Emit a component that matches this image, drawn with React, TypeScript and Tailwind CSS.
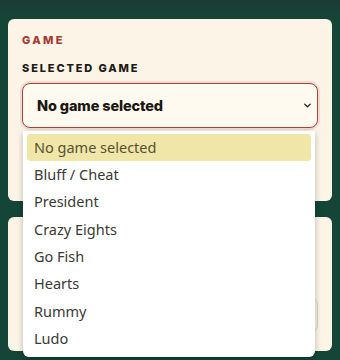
import { ChevronDown } from 'lucide-react';

const games = [
  'No game selected',
  'Bluff / Cheat',
  'President',
  'Crazy Eights',
  'Go Fish',
  'Hearts',
  'Rummy',
  'Ludo',
];

export default function App() {
  return (
    <div className="relative h-[360px] w-[340px] overflow-hidden bg-gradient-to-b from-[#1b3b34] to-[#144536] to-[20px] px-2 pt-[19px] font-['Inter',sans-serif]">
      {/* Game card */}
      <div className="h-[182px] rounded-md bg-[#fbf4e7] px-[14px] pt-[16px]">
        <div className="text-[11px] font-extrabold uppercase leading-none tracking-[0.21em] text-[#a83832]">Game</div>
        <div className="mt-[17px] text-[11px] font-extrabold uppercase leading-none tracking-[0.17em] text-[#1e1a15]">
          Selected Game
        </div>
        <div className="mt-[9px] flex h-[45px] items-center justify-between rounded-lg border border-[#a8423d] bg-[#fffaf0] pl-[14px] pr-[4px] shadow-[0_0_0_2px_rgba(200,120,110,0.2)]">
          <span className="text-[14.5px] font-extrabold tracking-[-0.01em] text-[#1b1713]">No game selected</span>
          <ChevronDown className="h-[11px] w-[11px] text-[#1b1713]" strokeWidth={3} />
        </div>
      </div>

      {/* Second card */}
      <div className="mt-[16px] h-[134px] rounded-md bg-[#fbf4e7] px-[14px] pt-[80px]">
        <div className="ml-auto h-[36px] w-[10px] rounded-r-lg border-r border-[#d8d0c2]" />
      </div>

      {/* Open select list */}
      <div className="absolute left-[23px] top-[131px] h-[226px] w-[292px] rounded-b-md bg-white px-[4px] pt-[3px] font-['Noto_Sans',sans-serif] shadow-[0_2px_6px_rgba(0,0,0,0.25)]">
        {games.map((g, i) => (
          <div
            key={g}
            className={`flex h-[27.3px] items-center rounded-sm px-[7px] text-[14.5px] text-[#3a3a36] ${
              i === 0 ? 'bg-[#f0e6a8] text-[#585032]' : ''
            }`}
          >
            {g}
          </div>
        ))}
      </div>
    </div>
  );
}
